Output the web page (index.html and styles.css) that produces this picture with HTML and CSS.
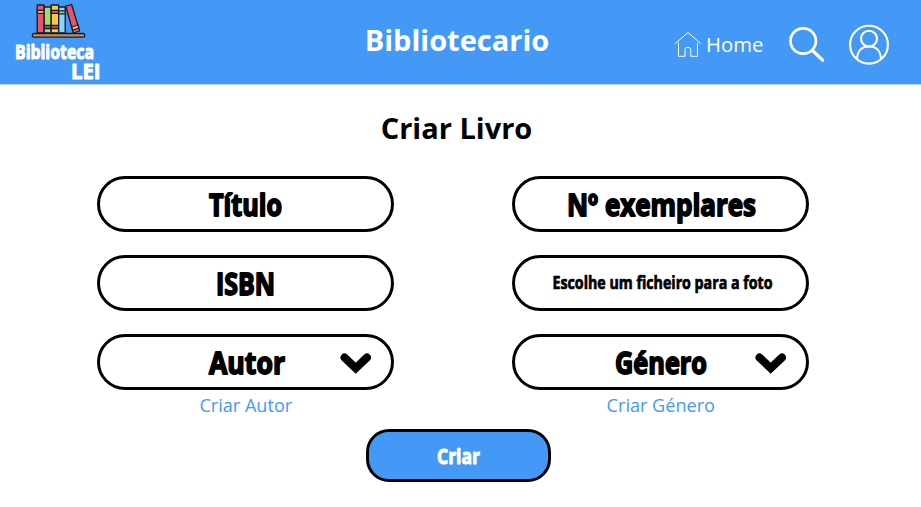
FILE: index.html
```
<!DOCTYPE html>
<html lang="pt">
<head>
<meta charset="utf-8">
<title>Biblioteca LEI</title>
<link rel="stylesheet" href="styles.css">
</head>
<body>
<header class="bar">
  <a class="logo">
    <svg width="110" height="84" viewBox="0 0 110 84">
      <g stroke="#111d2c" stroke-width="1.3" stroke-linejoin="round">
        <rect x="37.2" y="5" width="7" height="28" fill="#e9546b"/>
        <path d="M37.2 10.3h7v3h-7z" fill="#ffc34d"/>
        <rect x="44.2" y="7" width="7" height="26" fill="#a5dc69"/>
        <path d="M44.2 25.5h7v3h-7z" fill="#e9546b"/>
        <rect x="51.2" y="5" width="7.5" height="28" fill="#ffc34d"/>
        <path d="M51.2 10.3h7.5v3h-7.5zM51.2 25.5h7.5v3h-7.5z" fill="#e9546b"/>
        <rect x="58.7" y="7" width="6.5" height="26" fill="#8bd5fa"/>
        <path d="M58.7 10.8h6.5v3h-6.5z" fill="#a5dc69"/>
        <path d="M65.8 6.2L71.6 4.5L79.6 31L73.3 33Z" fill="#e9546b"/>
        <path d="M71.8 27l6.2-2 .9 3-6.2 2z" fill="#ffc34d"/>
        <rect x="32.3" y="33.5" width="52.5" height="3.7" rx="1.7" fill="#c88c5c"/>
      </g>
      <g class="hand hand-white">
        <text x="15" y="58.5" font-size="20" textLength="79" lengthAdjust="spacingAndGlyphs">Biblioteca</text>
        <text x="71" y="79" font-size="22" textLength="29.5" lengthAdjust="spacingAndGlyphs">LEI</text>
      </g>
    </svg>
  </a>
  <h1>Bibliotecario</h1>
  <nav>
    <a class="home">
      <svg width="28" height="28" viewBox="0 0 28 28" fill="none" stroke="#fff" stroke-width="1" stroke-linecap="round" stroke-linejoin="round"><path d="M1.5 13.3L14 2.5L26.5 13.3M4.5 13V26.3H11V19.5Q11 17.3 13.8 17.3T16.8 19.5V26.3H23.5V13"/></svg>
      <span>Home</span>
    </a>
    <svg class="search" width="38" height="38" viewBox="0 0 38 38" fill="none" stroke="#fff" stroke-width="2.7" stroke-linecap="round"><circle cx="15.2" cy="15" r="12.7"/><path d="M24.5 24.5L34.6 34.2" stroke-width="3.2"/></svg>
    <svg class="user" width="42" height="42" viewBox="0 0 42 42" fill="none" stroke="#fff" stroke-width="2.1"><circle cx="21" cy="20.7" r="18.9"/><circle cx="21" cy="14.7" r="8"/><path d="M9 35.2C9.2 26.7 14 22.4 21 22.4S32.8 26.7 33 35.2"/></svg>
  </nav>
</header>
<main>
  <h2>Criar Livro</h2>
  <form>
    <div class="field"><svg class="hand" width="290" height="50"><text x="108" y="37" font-size="31" textLength="73" lengthAdjust="spacingAndGlyphs">Título</text></svg></div>
    <div class="field"><svg class="hand" width="290" height="50"><text x="51" y="37" font-size="31" textLength="189" lengthAdjust="spacingAndGlyphs">Nº exemplares</text></svg></div>
    <div class="field"><svg class="hand" width="290" height="50"><text x="115" y="37" font-size="31" textLength="59" lengthAdjust="spacingAndGlyphs">ISBN</text></svg></div>
    <div class="field"><svg class="hand hand-small" width="290" height="50"><text x="36.5" y="31" font-size="17.5" textLength="220" lengthAdjust="spacingAndGlyphs">Escolhe um ficheiro para a foto</text></svg></div>
    <div class="field"><svg class="hand" width="290" height="50"><text x="108" y="36.5" font-size="31" textLength="76" lengthAdjust="spacingAndGlyphs">Autor</text><path class="chevron" d="M243.5 20.5L254.7 31.2L266 20.5"/></svg></div>
    <div class="field"><svg class="hand" width="290" height="50"><text x="99" y="36.5" font-size="31" textLength="92" lengthAdjust="spacingAndGlyphs">Género</text><path class="chevron" d="M243.5 20.5L254.7 31.2L266 20.5"/></svg></div>
    <a class="link">Criar Autor</a>
    <a class="link">Criar Género</a>
  </form>
  <button type="button"><svg class="hand hand-white" width="178" height="46"><text x="67" y="30.5" font-size="21" textLength="43" lengthAdjust="spacingAndGlyphs">Criar</text></svg></button>
</main>
</body>
</html>
```
FILE: styles.css
```
* { box-sizing: border-box; }
body { margin: 0; background: #fff; color: #000; font-family: "Open Sans", sans-serif; }
svg { display: block; flex: none; overflow: visible; }

.bar {
  display: grid;
  grid-template-columns: 364px 186px 1fr;
  height: 85px;
  background: #4499f7;
  border-bottom: 1px solid #b8d8fc;
  color: #fff;
}
h1 { margin: 20px 0 0; font-size: 29px; line-height: 40px; font-weight: 700; text-align: center; white-space: nowrap; }
nav { display: flex; align-items: flex-start; padding: 24px 0 0 124px; }
.home { display: flex; gap: 4px; margin-top: 6px; font-size: 20.3px; line-height: 28px; width: 114px; }
.search { margin-top: 2px; }
.user { margin-left: 22px; }

.hand { fill: #000; stroke: #000; stroke-width: 1.8; stroke-linejoin: round; font-family: "Open Sans", sans-serif; font-weight: 700; }
.hand-small { stroke-width: .7; }
.hand-white { fill: #fff; stroke: #fff; stroke-width: 1; }
.chevron { fill: none; stroke-width: 8; stroke-linecap: round; stroke-linejoin: miter; }

main { display: flex; flex-direction: column; align-items: center; }
h2 { margin: 23px 8px 0 0; font-size: 29px; line-height: 40px; font-weight: 700; }
form {
  display: grid;
  grid-template-columns: 297px 297px;
  grid-auto-rows: 56px;
  gap: 23px 118px;
  width: 712px;
  height: 253px;
  margin: 28.3px 14.4px 0 0;
}
.field { display: flex; align-items: center; justify-content: center; padding-left: 1px; border: 3px solid #000; border-radius: 28px; }
.link { margin-top: -22px; color: #4499f7; font-size: 18.1px; line-height: 28px; text-align: center; }
button {
  display: flex; align-items: center; justify-content: center;
  width: 185px; height: 53px; margin: 0 4px 0 0; padding: 0;
  border: 3px solid #000; border-radius: 23px; background: #4499f7;
}
```
